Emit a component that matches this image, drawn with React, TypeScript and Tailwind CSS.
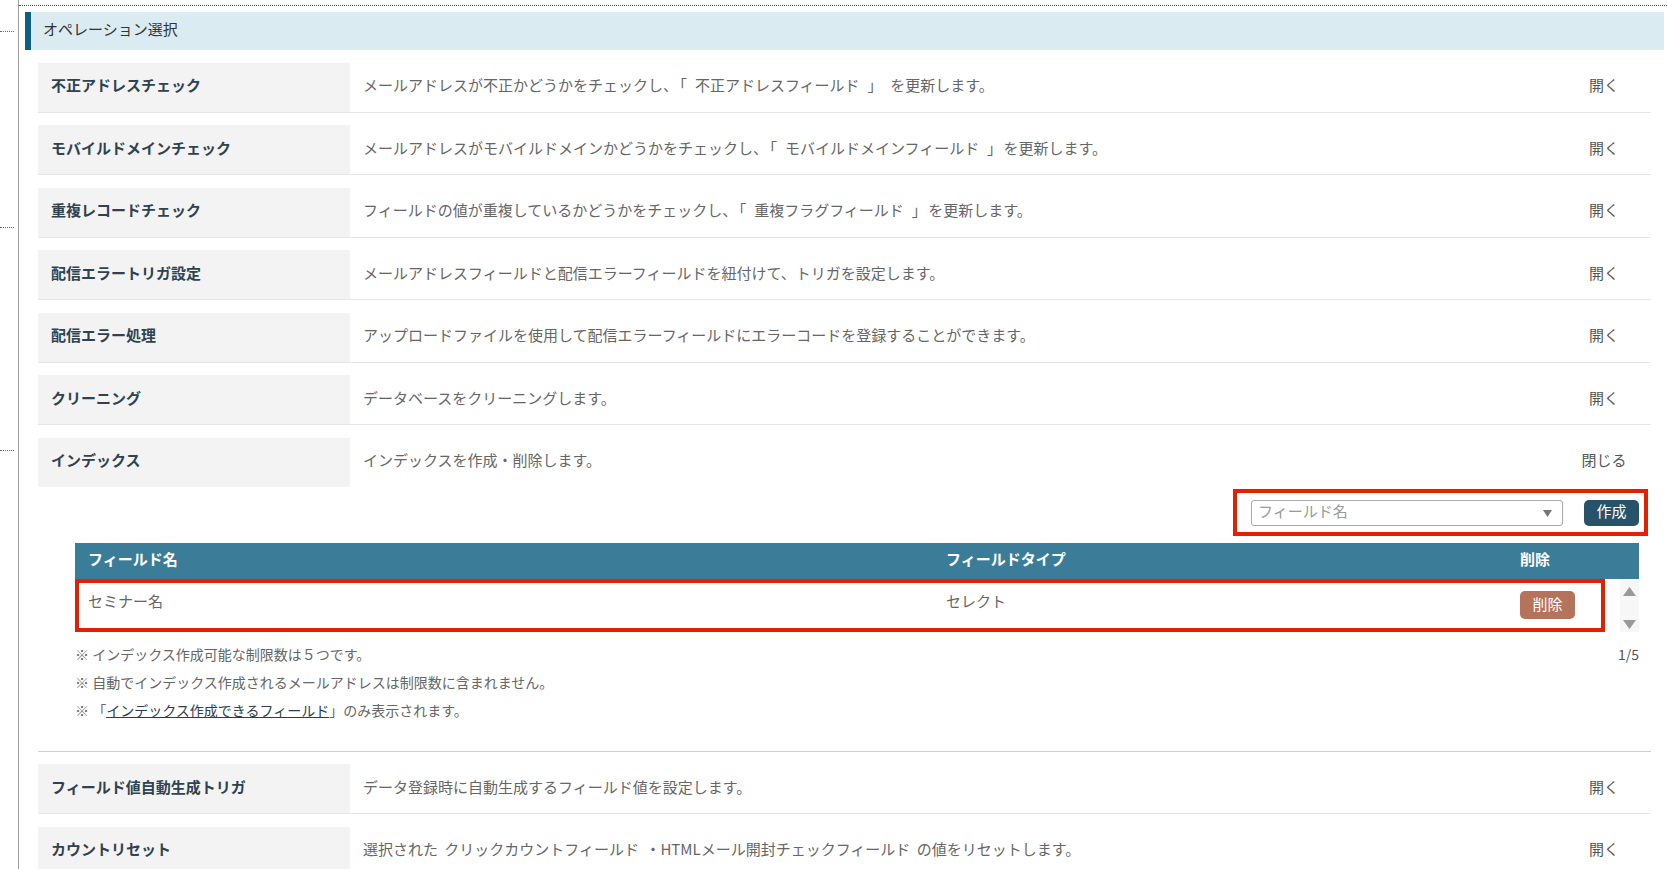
import React from "react";

type Row = { label: string; desc: React.ReactNode };

const Br = ({ children }: { children: React.ReactNode }) => <span className="px-[1.5px]">{children}</span>;

const rowsTop: Row[] = [
  {
    label: "不正アドレスチェック",
    desc: (
      <>
        メールアドレスが不正かどうかをチェックし、<Br>「</Br> 不正アドレスフィールド <Br>」</Br> を更新します。
      </>
    ),
  },
  {
    label: "モバイルドメインチェック",
    desc: (
      <>
        メールアドレスがモバイルドメインかどうかをチェックし、<Br>「</Br> モバイルドメインフィールド <Br>」</Br>を更新します。
      </>
    ),
  },
  {
    label: "重複レコードチェック",
    desc: (
      <>
        フィールドの値が重複しているかどうかをチェックし、<Br>「</Br> 重複フラグフィールド <Br>」</Br>を更新します。
      </>
    ),
  },
  { label: "配信エラートリガ設定", desc: "メールアドレスフィールドと配信エラーフィールドを紐付けて、トリガを設定します。" },
  { label: "配信エラー処理", desc: "アップロードファイルを使用して配信エラーフィールドにエラーコードを登録することができます。" },
  { label: "クリーニング", desc: "データベースをクリーニングします。" },
];

const rowsBottom: Row[] = [
  { label: "フィールド値自動生成トリガ", desc: "データ登録時に自動生成するフィールド値を設定します。" },
  { label: "カウントリセット", desc: "選択された クリックカウントフィールド ・HTMLメール開封チェックフィールド の値をリセットします。" },
];

function RowHead({ r, toggle }: { r: Row; toggle: string }) {
  return (
    <div className="flex h-[49px] items-center">
      <div className="flex h-full w-[312px] shrink-0 items-center bg-[#f3f3f3] pb-[3px] pl-[13px] text-[15px] font-bold text-[#2e4250]">
        {r.label}
      </div>
      <div className="flex-1 pb-[3px] pl-[13px] text-[15px] text-[#666] [word-spacing:3px]">{r.desc}</div>
      <div className="w-[94px] shrink-0 pb-[3px] text-center text-[15px] text-[#555]">{toggle}</div>
    </div>
  );
}

function SimpleRow({ r }: { r: Row }) {
  return (
    <div className="mt-[12.5px] border-b border-[#e6e6e6]">
      <RowHead r={r} toggle="開く" />
    </div>
  );
}

export default function App() {
  return (
    <div className="flex h-[869px] w-full overflow-hidden bg-white font-['Noto_Sans_CJK_JP','Noto_Sans',sans-serif] leading-normal">
      {/* left tree column */}
      <div className="flex w-[18px] shrink-0 flex-col">
        <div className="mt-[31px] w-[14px] border-t border-dotted border-[#666]" />
        <div className="mt-[195px] w-[14px] border-t border-dotted border-[#666]" />
        <div className="mt-[222px] w-[14px] border-t border-dotted border-[#666]" />
      </div>
      <div className="w-px shrink-0 bg-[#a0a0a0]" />
      {/* main */}
      <div className="min-w-0 flex-1 pt-[5px]">
        <div className="border-t border-dotted border-[#555]" />
        <div className="ml-[6px] mr-[3px] mt-[6px] flex h-[38px] items-center border-l-[6px] border-[#0e6080] bg-[#daebf2] pb-[3px] pl-[12px] text-[15px] text-[#333]">
          オペレーション選択
        </div>
        <div className="ml-[19px] mr-[16px]">
          {rowsTop.map((r) => (
            <SimpleRow key={r.label} r={r} />
          ))}

          {/* index (expanded) */}
          <div className="mt-[12.5px] border-b border-[#cfcfcf] pb-[27px]">
            <RowHead r={{ label: "インデックス", desc: "インデックスを作成・削除します。" }} toggle="閉じる" />
            <div className="mr-[3px] mt-[2px] flex justify-end">
              <div className="flex items-center border-4 border-[#e02200] pb-[6px] pl-[14px] pr-[5px] pt-[7px]">
                <div className="relative flex h-[26px] w-[312px] items-center rounded-[3px] border border-[#aaa] bg-white pb-[2px] pl-[6px] text-[15px] text-[#999]">
                  フィールド名
                  <svg className="absolute right-[10px] top-[9px]" width="9" height="7" viewBox="0 0 9 7">
                    <path d="M0 0 H9 L4.5 7 Z" fill="#777" />
                  </svg>
                </div>
                <div className="ml-[21px] flex h-[26px] w-[55px] items-center justify-center rounded-[5px] bg-[#27526a] pb-[2px] text-[15px] text-white">
                  作成
                </div>
              </div>
            </div>

            <div className="ml-[37px] mr-[12px] mt-[7px]">
              <div className="flex h-[36px] items-center bg-[#3b7d98] pb-[3px] text-[15px] font-bold text-white">
                <div className="w-[871px] shrink-0 pl-[13px]">フィールド名</div>
                <div className="w-[574px] shrink-0">フィールドタイプ</div>
                <div>削除</div>
              </div>
              <div className="flex h-[53px]">
                <div className="flex flex-1 items-center border-4 border-[#e02200] text-[15px] text-[#666]">
                  <div className="w-[867px] shrink-0 pb-[7px] pl-[9px]">セミナー名</div>
                  <div className="w-[574px] shrink-0 pb-[7px]">セレクト</div>
                  <div className="flex h-[28px] w-[55px] items-center justify-center rounded-[5px] bg-[#b5735b] pb-[2px] text-[15px] text-white">
                    削除
                  </div>
                </div>
                <div className="w-[15px] shrink-0" />
                <div className="flex w-[19px] shrink-0 flex-col items-center justify-between bg-[#f7f7f7] pb-[3px] pt-[8px]">
                  <svg width="13" height="9" viewBox="0 0 13 9">
                    <path d="M6.5 0 L13 9 H0 Z" fill="#999" />
                  </svg>
                  <svg width="13" height="9" viewBox="0 0 13 9">
                    <path d="M0 0 H13 L6.5 9 Z" fill="#999" />
                  </svg>
                </div>
              </div>
              <div className="mt-[8px] text-[14px] leading-[28px] text-[#666]">
                <div className="flex justify-between">
                  <span>※ インデックス作成可能な制限数は５つです。</span>
                  <span className="text-[#555]">1/5</span>
                </div>
                <div>※ 自動でインデックス作成されるメールアドレスは制限数に含まれません。</div>
                <div>
                  ※ 「<span className="text-[#2c3e50] underline">インデックス作成できるフィールド</span>」のみ表示されます。
                </div>
              </div>
            </div>
          </div>

          {rowsBottom.map((r) => (
            <SimpleRow key={r.label} r={r} />
          ))}
        </div>
      </div>
    </div>
  );
}
